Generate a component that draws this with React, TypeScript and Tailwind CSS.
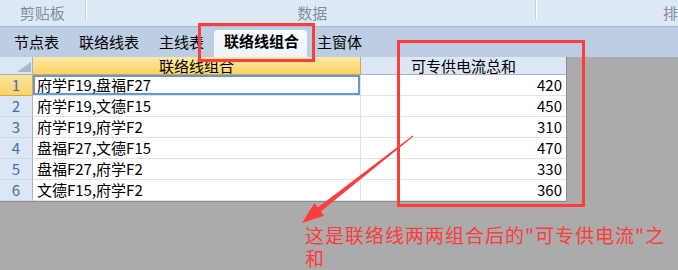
import React from 'react';

const rows = [
  { name: '府学F19,盘福F27', total: 420 },
  { name: '府学F19,文德F15', total: 450 },
  { name: '府学F19,府学F2', total: 310 },
  { name: '盘福F27,文德F15', total: 470 },
  { name: '盘福F27,府学F2', total: 330 },
  { name: '文德F15,府学F2', total: 360 },
];

const tabs = ['节点表', '联络线表', '主线表', '联络线组合', '主窗体'];
const activeTab = '联络线组合';

export default function App() {
  return (
    <div className="relative w-[678px] h-[270px] overflow-hidden bg-[#ababab] font-['Noto_Sans_CJK_SC',sans-serif] text-[15px]">
      {/* ribbon group labels */}
      <div className="flex h-[27px] bg-[#dfe9f5] border-b border-[#a7bad4] text-[#7f8ea3]">
        <div className="w-[86px] flex justify-center pt-[4px] leading-[18px]">剪贴板</div>
        <div className="w-px h-[20px] bg-[#c3d0e0] shadow-[1px_0_0_#ffffff]" />
        <div className="w-[457px] flex justify-center pt-[4px] pl-[4px] leading-[18px]">数据</div>
        <div className="w-px h-[20px] bg-[#c3d0e0] shadow-[1px_0_0_#ffffff]" />
        <div className="flex-1 pl-[127px] pt-[4px] leading-[18px]">排</div>
      </div>

      {/* sheet tabs */}
      <div className="flex items-end h-[30px] bg-[#bccde4] pl-[4px]">
        {tabs.map((t) =>
          t === activeTab ? (
            <div
              key={t}
              className="h-[27px] pl-[10px] pr-[8px] pt-[2px] leading-[18px] font-bold text-black rounded-t-[4px] bg-gradient-to-b from-[#f7faff] to-[#eef3fa]"
            >
              {t}
            </div>
          ) : (
            <div key={t} className="h-[27px] px-[10px] pt-[3px] leading-[18px] text-black">
              {t}
            </div>
          )
        )}
      </div>

      {/* grid */}
      <div className="w-[567px] border-r border-b border-[#8c8c8c] bg-white">
        <div className="flex h-[18px]">
          <div className="w-[33px] bg-[#dce6f4] border-r border-b border-[#9eb6ce] flex items-end justify-end pr-[1px] pb-[2px]">
            <svg width="14" height="10" viewBox="0 0 14 10">
              <polygon points="14,0 14,10 0,10" fill="#a9b8cc" />
            </svg>
          </div>
          <div className="w-[328px] bg-gradient-to-b from-[#fde9a4] to-[#f9d25f] border-r border-b border-[#e2a33c] flex items-center justify-center leading-[17px] text-black">
            联络线组合
          </div>
          <div className="w-[205px] bg-[#dce6f4] border-b border-[#9eb6ce] flex items-center justify-center leading-[17px] text-black">
            可专供电流总和
          </div>
        </div>
        {rows.map((r, i) => (
          <div key={r.name} className="flex h-[21px]">
            <div
              className={
                i === 0
                  ? 'w-[33px] bg-gradient-to-b from-[#fde39a] to-[#f9d36a] border-r border-b border-[#e2a33c] flex items-center justify-center text-[#3f6fb0]'
                  : 'w-[33px] bg-[#dce6f4] border-r border-b border-r-[#9eb6ce] border-b-[#c9d7e8] flex items-center justify-center text-[#3f6fb0]'
              }
            >
              {i + 1}
            </div>
            <div
              className={
                i === 0
                  ? 'w-[328px] border-r border-b border-[#e3e3e3] flex items-center pl-[4px] text-black shadow-[inset_0_0_0_2px_#5b9be0]'
                  : 'w-[328px] border-r border-b border-[#e3e3e3] flex items-center pl-[4px] text-black'
              }
            >
              {r.name}
            </div>
            <div className="w-[205px] border-b border-[#e3e3e3] flex items-center justify-end pr-[4px] text-black">
              {r.total}
            </div>
          </div>
        ))}
      </div>

      {/* annotations */}
      <div className="absolute left-[198px] top-[23px] w-[117px] h-[39px] border-[3px] border-[#ff3c3c]" />
      <div className="absolute left-[397px] top-[40px] w-[188px] h-[167px] border-[3px] border-[#ff3c3c]" />
      <svg className="absolute left-0 top-0 pointer-events-none" width="678" height="270" viewBox="0 0 678 270">
        <polygon points="412.7,135.6 413.3,136.4 320.8,211.4 317.8,207.4" fill="#ff3c3c" />
        <polygon points="302,223 314.4,203.1 324.2,215.7" fill="#ff3c3c" />
      </svg>
      <div className="absolute left-[305px] top-[223px] w-[372px] text-[19px] tracking-[1px] leading-[23px] text-[#ff3a3a]">
        这是联络线两两组合后的"可专供电流"之和
      </div>
    </div>
  );
}
